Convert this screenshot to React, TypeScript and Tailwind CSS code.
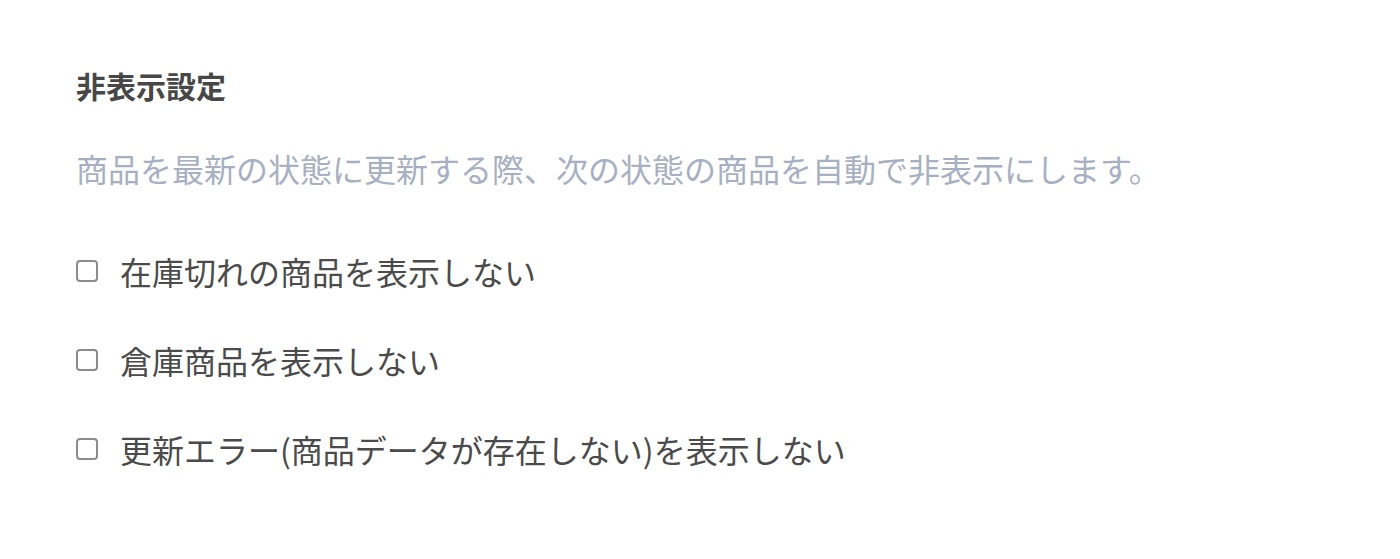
import React from 'react';

const items = [
  '在庫切れの商品を表示しない',
  '倉庫商品を表示しない',
  '更新エラー(商品データが存在しない)を表示しない',
];

export default function App() {
  return (
    <div
      className="min-h-[559px] w-[1400px] bg-white pl-[76px] pt-[68px]"
      style={{ fontFamily: '"Noto Sans CJK JP", "Noto Sans", sans-serif' }}
    >
      <h2 className="text-[30px] leading-[34px] font-bold text-[#474747]">非表示設定</h2>
      <p className="mt-[48px] text-[32px] leading-[36px] text-[#a7b0c2]">
        商品を最新の状態に更新する際、次の状態の商品を自動で非表示にします。
      </p>
      <div className="mt-[67px] flex flex-col gap-[53px]">
        {items.map((label) => (
          <label key={label} className="flex items-center text-[32px] leading-[36px] text-[#4b4b4b]">
            <input
              type="checkbox"
              className="mr-[22px] h-[22px] w-[22px] appearance-none rounded-[4px] border-2 border-[#8c8c8c] bg-white"
            />
            {label}
          </label>
        ))}
      </div>
    </div>
  );
}
